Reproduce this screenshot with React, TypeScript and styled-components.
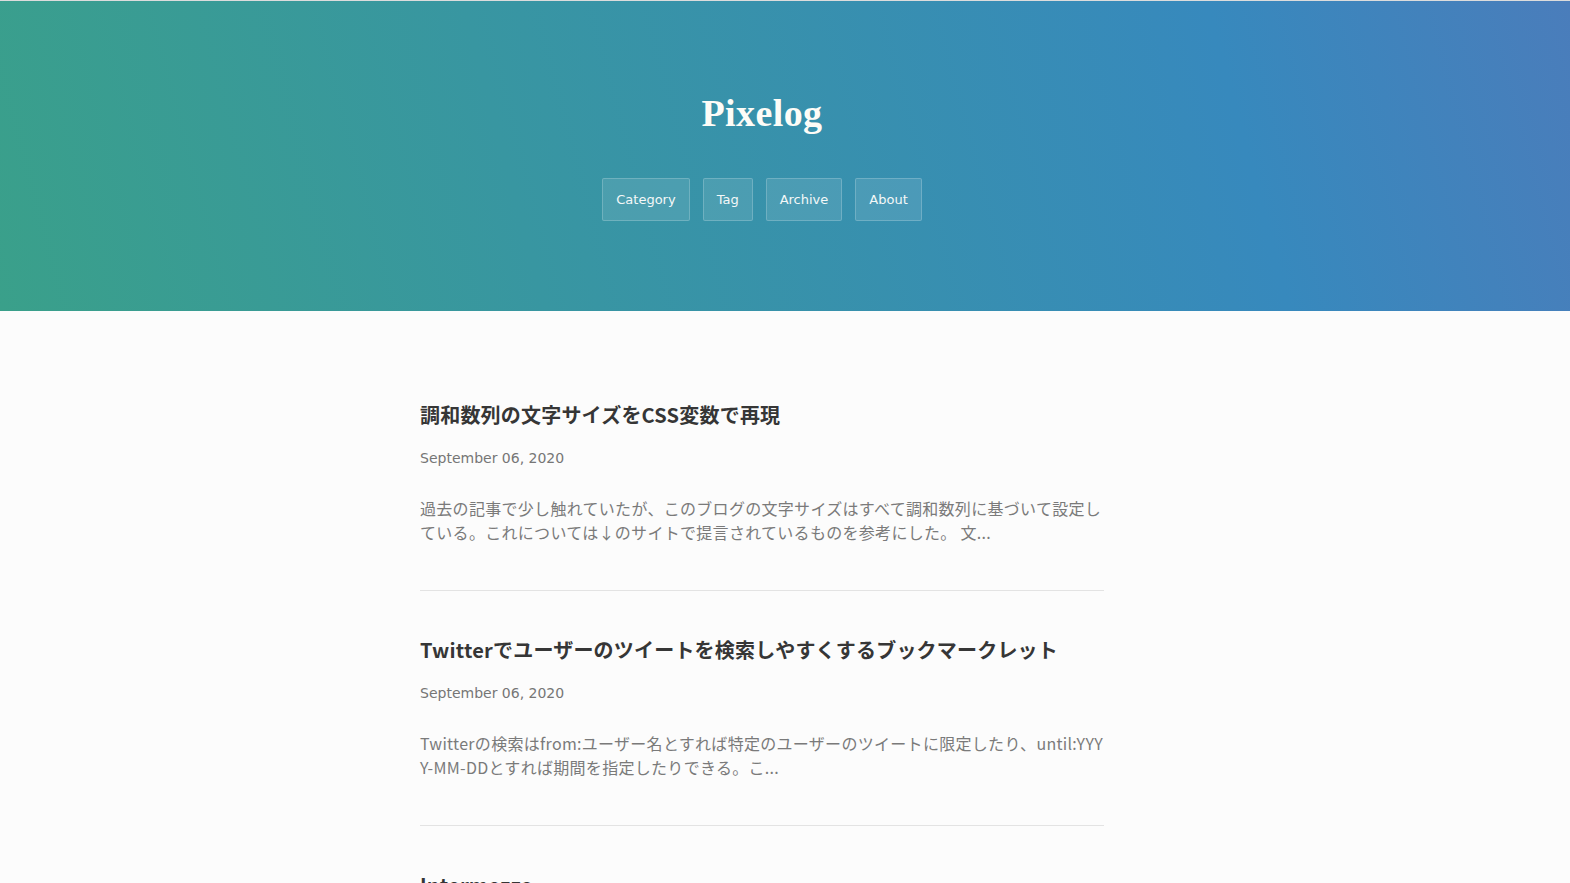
import React from "react";
import styled, { createGlobalStyle } from "styled-components";

const Global = createGlobalStyle`
  html, body { margin: 0; padding: 0; background: #fcfcfc; }
  body { font-family: "DejaVu Sans", "Noto Sans CJK JP", sans-serif; }
  * { box-sizing: border-box; }
`;

const Header = styled.header`
  border-top: 1px solid #dcdcdc;
  height: 311px;
  padding: 88px 46px 0 0;
  display: flex;
  flex-direction: column;
  align-items: center;
  background: linear-gradient(75deg, #3aa08a 0%, #3896a1 33%, #3789bd 78%, #4a7dbb 100%);
`;

const SiteTitle = styled.h1`
  margin: 0;
  font-family: "Liberation Serif", "DejaVu Serif", serif;
  font-weight: 700;
  font-size: 38px;
  line-height: 48px;
  color: #fdfcf7;
  letter-spacing: 0.4px;
`;

const Nav = styled.nav`
  margin-top: 41px;
  display: flex;
  gap: 13px;
`;

const NavButton = styled.a`
  display: flex;
  align-items: center;
  height: 43px;
  padding: 0 13px;
  border: 1px solid rgba(255, 255, 255, 0.2);
  border-radius: 2px;
  background: rgba(255, 255, 255, 0.1);
  color: #f4f8f8;
  font-family: "DejaVu Sans", sans-serif;
  font-size: 13px;
  text-decoration: none;
`;

const Page = styled.div`
  padding-right: 46px;
`;

const Main = styled.main`
  width: 684px;
  margin: 0 auto;
  padding-top: 45px;
`;

const Article = styled.article<{ $last?: boolean }>`
  padding: 44px 0 46px;
  border-bottom: ${(p) => (p.$last ? "none" : "1px solid #e3e3e3")};
`;

const PostTitle = styled.h2`
  margin: 0;
  font-family: "Noto Sans CJK JP", sans-serif;
  font-weight: 700;
  font-size: 20px;
  line-height: 30px;
  color: #363636;
  letter-spacing: 0.2px;
`;

const PostDate = styled.div`
  margin-top: 18px;
  font-family: "DejaVu Sans", sans-serif;
  font-size: 14px;
  line-height: 20px;
  color: #767676;
`;

const Excerpt = styled.p`
  margin: 28px 0 0;
  font-family: "Noto Sans CJK JP", sans-serif;
  font-size: 16px;
  line-height: 24px;
  color: #7a7a7a;
  letter-spacing: 0.3px;
  word-break: break-all;
`;

const posts = [
  {
    title: "調和数列の文字サイズをCSS変数で再現",
    date: "September 06, 2020",
    excerpt:
      "過去の記事で少し触れていたが、このブログの文字サイズはすべて調和数列に基づいて設定している。これについては↓のサイトで提言されているものを参考にした。 文...",
  },
  {
    title: "Twitterでユーザーのツイートを検索しやすくするブックマークレット",
    date: "September 06, 2020",
    excerpt:
      "Twitterの検索はfrom:ユーザー名とすれば特定のユーザーのツイートに限定したり、until:YYYY-MM-DDとすれば期間を指定したりできる。こ...",
  },
  {
    title: "Intermezzo",
    date: "September 06, 2020",
    excerpt: "",
  },
];

export default function App() {
  return (
    <>
      <Global />
      <Header>
        <SiteTitle>Pixelog</SiteTitle>
        <Nav>
          <NavButton href="#">Category</NavButton>
          <NavButton href="#">Tag</NavButton>
          <NavButton href="#">Archive</NavButton>
          <NavButton href="#">About</NavButton>
        </Nav>
      </Header>
      <Page>
        <Main>
          {posts.map((p, i) => (
            <Article key={i} $last={i === posts.length - 1}>
              <PostTitle>{p.title}</PostTitle>
              <PostDate>{p.date}</PostDate>
              {p.excerpt && <Excerpt>{p.excerpt}</Excerpt>}
            </Article>
          ))}
        </Main>
      </Page>
    </>
  );
}
